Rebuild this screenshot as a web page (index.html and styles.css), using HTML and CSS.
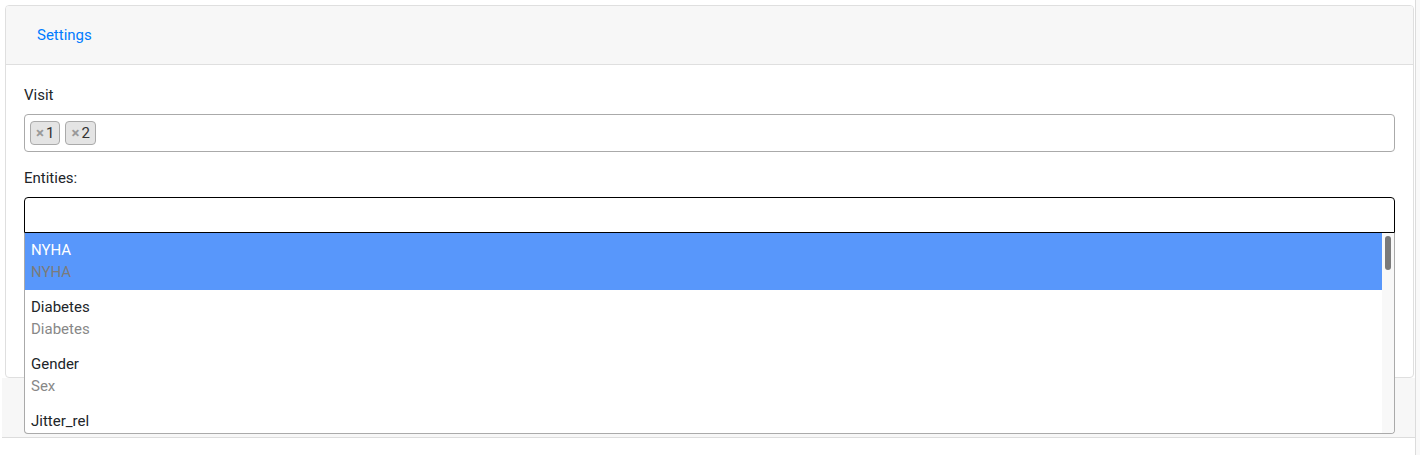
FILE: index.html
```html
<!DOCTYPE html>
<html lang="en">
<head>
<meta charset="utf-8">
<title>Settings</title>
<link rel="stylesheet" href="styles.css">
</head>
<body>
<div class="page">
  <div class="card">
    <div class="card-header"><a class="tab-link" href="#">Settings</a></div>
    <div class="card-body">
      <div class="form-group">
        <label class="label">Visit</label>
        <div class="select">
          <ul class="choices">
            <li class="choice"><span class="remove">×</span>1</li>
            <li class="choice"><span class="remove">×</span>2</li>
          </ul>
        </div>
      </div>
      <div class="form-group last">
        <label class="label">Entities:</label>
        <div class="select-wrap">
          <div class="select open"></div>
          <div class="dropdown">
            <ul class="results">
              <li class="option hl"><span class="main">NYHA</span><span class="sub">NYHA</span></li>
              <li class="option"><span class="main">Diabetes</span><span class="sub">Diabetes</span></li>
              <li class="option"><span class="main">Gender</span><span class="sub">Sex</span></li>
              <li class="option"><span class="main">Jitter_rel</span></li>
            </ul>
            <div class="scrollbar"><div class="thumb"></div></div>
          </div>
        </div>
      </div>
    </div>
  </div>
  <div class="footer"></div>
</div>
</body>
</html>
```
FILE: styles.css
```css
html {
  background: #f9f9f9;
}
body {
  margin: 0;
  font-family: Roboto, "Liberation Sans", Arial, sans-serif;
  font-size: 15px;
  line-height: 21px;
  color: #212529;
}
.page {
  width: 1416px;
  min-height: 455px;
  box-sizing: border-box;
  padding-top: 5px;
  background: #fff;
  border-right: 1px solid #dcdcdc;
}
.card {
  margin: 0 1px 0 5px;
  border: 1px solid #dfdfdf;
  border-radius: 4px;
  background: #fff;
}
.card-header {
  height: 58px;
  display: flex;
  align-items: center;
  padding-left: 31px;
  background: #f7f7f7;
  border-bottom: 1px solid #dfdfdf;
  border-radius: 3px 3px 0 0;
}
.tab-link {
  color: #007bff;
  text-decoration: none;
}
.card-body {
  padding: 20px 18px 144px;
}
.form-group {
  margin-bottom: 16px;
}
.form-group.last {
  margin-bottom: 0;
}
.label {
  display: block;
  margin-bottom: 8px;
}
.select {
  height: 38px;
  box-sizing: border-box;
  border: 1px solid #aaa;
  border-radius: 4px;
  background: #fff;
}
.choices {
  list-style: none;
  margin: 0;
  padding: 0 5px;
  display: flex;
  gap: 5px;
}
.choice {
  margin-top: 6px;
  height: 24px;
  box-sizing: border-box;
  padding: 0 5px;
  line-height: 22px;
  background: #e4e4e4;
  border: 1px solid #aaa;
  border-radius: 4px;
  color: #333;
}
.remove {
  color: #999;
  font-weight: bold;
  margin-right: 2px;
}
.select-wrap {
  position: relative;
}
.select.open {
  height: 36px;
  border-color: #000;
  border-radius: 4px 4px 0 0;
}
.dropdown {
  position: absolute;
  top: 100%;
  left: 0;
  right: 0;
  height: 200px;
  display: flex;
  background: #fff;
  border: 1px solid #aaa;
  border-top: none;
  border-radius: 0 0 4px 4px;
  overflow: hidden;
  z-index: 2;
}
.results {
  flex: 1;
  list-style: none;
  margin: 0;
  padding: 0;
  overflow: hidden;
}
.option {
  height: 57px;
  box-sizing: border-box;
  padding: 7px 6px 7px;
}
.main,
.sub {
  display: block;
}
.sub {
  margin-top: 1px;
  color: #888;
}
.option.hl {
  background: #5897fb;
  color: #fff;
}
.option.hl .sub {
  color: #7b7b7b;
}
.scrollbar {
  width: 12px;
  padding-top: 3px;
  box-sizing: border-box;
  background: #f8f8f8;
}
.thumb {
  width: 6px;
  height: 34px;
  margin-left: 3px;
  border-radius: 3px;
  background: #7a7a7a;
}
.footer {
  margin-left: 2px;
  height: 59px;
  background: #f7f7f7;
  border-bottom: 1px solid #dcdcdc;
}
```
